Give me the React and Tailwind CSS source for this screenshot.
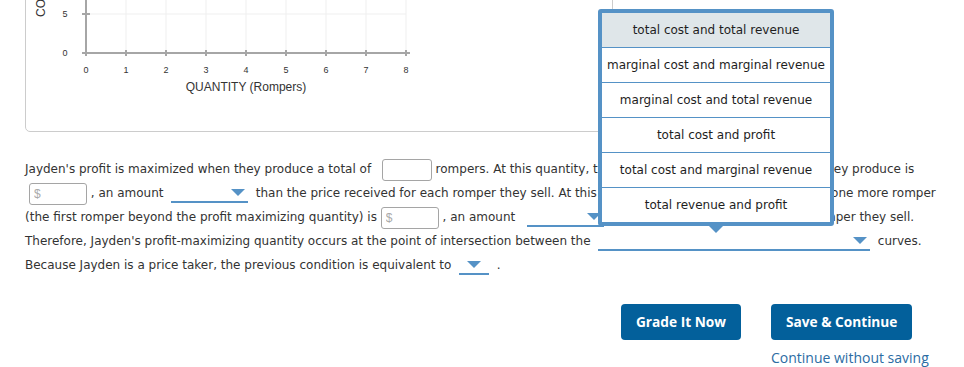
import React from "react";

function Dropdown({ w, center, ml = 0 }) {
  return (
    <span
      className={`inline-flex align-middle h-[18px] border-b-2 border-[#5592c6] items-center ${center ? "justify-center" : "justify-end pr-[3px]"}`}
      style={{ width: w, marginLeft: ml }}
    >
      <span className="w-0 h-0 border-l-[7px] border-r-[7px] border-t-[7px] border-l-transparent border-r-transparent border-t-[#5592c6]" />
    </span>
  );
}

function Input({ w, dollar, ml = 0 }) {
  return (
    <input
      readOnly
      placeholder={dollar ? "$" : ""}
      className="inline-block align-middle h-[22px] border border-[#a5a5a5] rounded-[3px] px-[4px] text-[12px] placeholder:text-[#aaaaaa] bg-white outline-none"
      style={{ width: w, marginLeft: ml, fontFamily: '"Liberation Sans", Arial, sans-serif' }}
    />
  );
}

function Chart() {
  const xs = [0, 1, 2, 3, 4, 5, 6, 7, 8];
  const axis = "#a6a6a6";
  return (
    <svg width="586" height="140" viewBox="26 -9 586 140" className="block">
      {xs.slice(1).map((k) => (
        <line key={"g" + k} x1={86 + 40 * k} y1={-9} x2={86 + 40 * k} y2={53} stroke="#efefef" strokeWidth="1" />
      ))}
      <line x1={86} y1={14} x2={406} y2={14} stroke="#efefef" strokeWidth="1" />
      <line x1={86} y1={-9} x2={86} y2={54} stroke={axis} strokeWidth="2" />
      <line x1={85} y1={53} x2={410} y2={53} stroke={axis} strokeWidth="2" />
      {xs.map((k) => (
        <line key={"t" + k} x1={86 + 40 * k} y1={50} x2={86 + 40 * k} y2={56} stroke={axis} strokeWidth="2" />
      ))}
      <line x1={82} y1={14} x2={90} y2={14} stroke={axis} strokeWidth="2" />
      <line x1={82} y1={53} x2={90} y2={53} stroke={axis} strokeWidth="2" />
      <g fontFamily='"Liberation Sans", Arial, sans-serif' fill="#333" fontSize="9">
        <text x={65} y={17} textAnchor="middle">5</text>
        <text x={65} y={56} textAnchor="middle">0</text>
        {xs.map((k) => (
          <text key={"l" + k} x={86 + 40 * k} y={72.5} textAnchor="middle">{k}</text>
        ))}
      </g>
      <text x={246} y={91} textAnchor="middle" fontFamily='"Liberation Sans", Arial, sans-serif' fontSize="12" fill="#333">
        QUANTITY (Rompers)
      </text>
      <text
        x={0}
        y={0}
        transform="translate(45 17) rotate(-90)"
        fontFamily='"Liberation Sans", Arial, sans-serif'
        fontSize="12"
        fill="#333"
      >
        COSTS AND REVENUE (Dollars per romper)
      </text>
    </svg>
  );
}

const options = [
  "total cost and total revenue",
  "marginal cost and marginal revenue",
  "marginal cost and total revenue",
  "total cost and profit",
  "total cost and marginal revenue",
  "total revenue and profit",
];

export default function App() {
  return (
    <div
      className="relative w-[964px] h-[367px] overflow-hidden bg-white text-[#333]"
      style={{ fontFamily: '"DejaVu Sans", Verdana, sans-serif' }}
    >
      <div className="pl-[25px]">
        <div className="-mt-[10px] h-[142px] w-[588px] border border-[#cccccc] rounded-[5px] overflow-hidden">
          <Chart />
        </div>

        <div className="mt-[25px] text-[12px] whitespace-pre">
          <div className="h-[24px] leading-[24px]">
            {"Jayden's profit is maximized when they produce a total of  "}
            <Input w={50} ml={3} />
            {" rompers. At this quantity, the marginal cost of the last romper   they produce is"}
          </div>
          <div className="h-[24px] leading-[24px]">
            <span className="inline-block w-[4px]" />
            <Input w={58} dollar />
            {" , an amount  "}
            <Dropdown w={77} />
            {"  than the price received for each romper they sell. At this quantity, the marginal cost of making one more romper"}
          </div>
          <div className="h-[24px] leading-[24px]">
            {"(the first romper beyond the profit maximizing quantity) is "}
            <Input w={58} dollar />
            {" , an amount  "}
            <Dropdown w={77} ml={4} />
            {"  than the price received for each  romper they sell."}
          </div>
          <div className="h-[24px] leading-[24px]">
            {"Therefore, Jayden's profit-maximizing quantity occurs at the point of intersection between the  "}
            <Dropdown w={272} />
            {"  curves."}
          </div>
          <div className="h-[24px] leading-[24px]">
            {"Because Jayden is a price taker, the previous condition is equivalent to  "}
            <Dropdown w={30} center />
            {"  ."}
          </div>
        </div>
      </div>

      <div
        className="mt-[27px] flex justify-end gap-[30px] pr-[35px]"
        style={{ fontFamily: '"Open Sans", sans-serif' }}
      >
        <button className="h-[36px] px-[15px] rounded-[4px] bg-[#03609b] text-white text-[13.7px] font-bold">
          Grade It Now
        </button>
        <div className="flex flex-col items-start w-[158px]">
          <button className="h-[36px] px-[15px] rounded-[4px] bg-[#03609b] text-white text-[13.7px] font-bold">
            Save &amp; Continue
          </button>
          <span className="mt-[8px] text-[14px] leading-[19px] text-[#2b6ca3]">Continue without saving</span>
        </div>
      </div>

      <div className="absolute left-[598px] top-[9px] w-[236px]">
        <div className="border-4 border-[#5592c6] rounded-[3px] bg-white text-[12px] text-[#1e1e1e]">
          {options.map((o, i) => (
            <div
              key={o}
              className={`flex items-center justify-center ${i === 0 ? "h-[34px] bg-[#dfe6e9]" : "h-[35px] border-t border-[#5592c6]"}`}
            >
              {o}
            </div>
          ))}
        </div>
        <div className="mx-auto w-0 h-0 border-l-[7px] border-r-[7px] border-t-[7px] border-l-transparent border-r-transparent border-t-[#5592c6]" />
      </div>
    </div>
  );
}
